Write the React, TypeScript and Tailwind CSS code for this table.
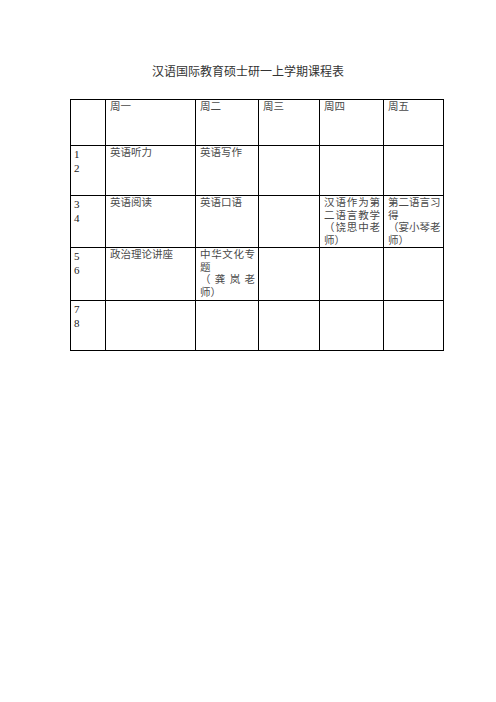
import React from "react";

const font = { fontFamily: '"Liberation Serif", "Noto Sans CJK SC", serif' };

function J({ chars }: { chars: string[] }) {
  return (
    <div className="flex justify-between">
      {chars.map((c, i) => (
        <span key={i}>{c}</span>
      ))}
    </div>
  );
}

function Cell({ children }: { children?: React.ReactNode }) {
  return <div className="bg-white pl-[4px] pr-[3px] pt-[1px] text-[10.5px] leading-[12.5px] text-[#4a4a4a]">{children}</div>;
}

function Num({ a, b }: { a: string; b: string }) {
  return (
    <div className="bg-white pl-[3px] pt-[1px] text-[11px] leading-[14px] text-[#222]">
      <div>{a}</div>
      <div>{b}</div>
    </div>
  );
}

export default function App() {
  return (
    <div className="w-[496px] h-[702px] bg-white" style={font}>
      <div className="pt-[64px] text-center text-[12px] leading-[16px] text-[#333]">汉语国际教育硕士研一上学期课程表</div>
      <div className="ml-[70px] mt-[19px] w-[374px] bg-black p-[1px] grid grid-cols-[34px_89px_62px_60px_63px_59px] grid-rows-[45px_49px_51px_52px_49px] gap-[1px]">
        <Cell />
        <Cell>周一</Cell>
        <Cell>周二</Cell>
        <Cell>周三</Cell>
        <Cell>周四</Cell>
        <Cell>周五</Cell>

        <Num a="1" b="2" />
        <Cell>英语听力</Cell>
        <Cell>英语写作</Cell>
        <Cell />
        <Cell />
        <Cell />

        <Num a="3" b="4" />
        <Cell>英语阅读</Cell>
        <Cell>英语口语</Cell>
        <Cell />
        <Cell>
          <J chars={["汉", "语", "作", "为", "第"]} />
          <J chars={["二", "语", "言", "教", "学"]} />
          <J chars={["（", "饶", "思", "中", "老"]} />
          <div>师）</div>
        </Cell>
        <Cell>
          <J chars={["第", "二", "语", "言", "习"]} />
          <div>得</div>
          <J chars={["（", "宴", "小", "琴", "老"]} />
          <div>师）</div>
        </Cell>

        <Num a="5" b="6" />
        <Cell>政治理论讲座</Cell>
        <Cell>
          <J chars={["中", "华", "文", "化", "专"]} />
          <div>题</div>
          <J chars={["（", "龚", "岚", "老"]} />
          <div>师）</div>
        </Cell>
        <Cell />
        <Cell />
        <Cell />

        <Num a="7" b="8" />
        <Cell />
        <Cell />
        <Cell />
        <Cell />
        <Cell />
      </div>
    </div>
  );
}
